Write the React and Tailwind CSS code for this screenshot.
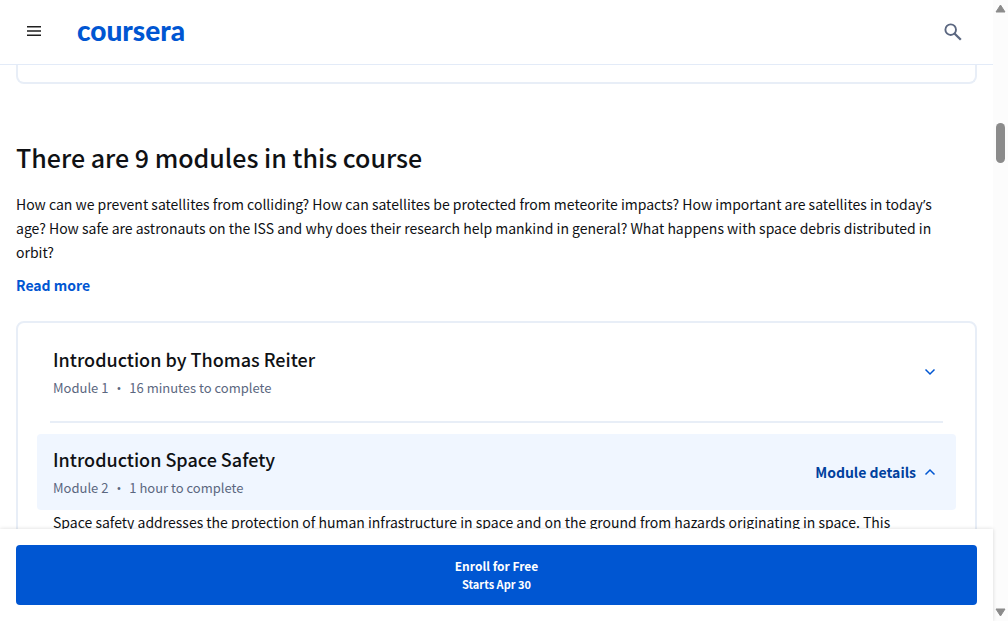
import React from "react";

const modules = [
  { title: "Introduction by Thomas Reiter", name: "Module 1", time: "16 minutes to complete", open: false },
  {
    title: "Introduction Space Safety",
    name: "Module 2",
    time: "1 hour to complete",
    open: true,
    text: "Space safety addresses the protection of human infrastructure in space and on the ground from hazards originating in space. This",
  },
];

function Chevron({ up }) {
  return (
    <svg width="12" height="12" viewBox="0 0 12 12" fill="none" stroke="#0056d2" strokeWidth="1.5" aria-hidden="true">
      <path d={up ? "M1.5 8.5L6 4l4.5 4.5" : "M1.5 3.5L6 8l4.5-4.5"} />
    </svg>
  );
}

function Header() {
  return (
    <header className="flex h-[65px] shrink-0 items-center border-b border-[#e3ebf8] bg-white pr-[31px] pl-[26px]">
      <button type="button" aria-label="Menu" className="flex size-4 items-center justify-center">
        <svg width="16" height="16" viewBox="0 0 16 16" aria-hidden="true">
          <path d="M1 2.8h14M1 7h14M1 11.2h14" stroke="#1f1f1f" strokeWidth="1.6" />
        </svg>
      </button>
      <a href="#home" className="ml-[35px] pb-1 font-['Lato',sans-serif] text-[28px] leading-8 font-black text-[#0056d2]">
        coursera
      </a>
      <button type="button" aria-label="Search" className="ml-auto">
        <svg width="18" height="18" viewBox="0 0 18 18" fill="none" stroke="#5b6780" aria-hidden="true">
          <circle cx="6.7" cy="6.7" r="5.3" strokeWidth="1.9" />
          <path d="M10.5 10.5L16.8 16.8" strokeWidth="2.3" />
        </svg>
      </button>
    </header>
  );
}

function ModuleRow({ item }) {
  return (
    <section>
      <button
        type="button"
        aria-expanded={item.open}
        className={
          item.open
            ? "flex w-full items-center justify-between rounded bg-[#f0f6ff] px-4 py-3 text-left"
            : "flex w-full items-center justify-between rounded px-4 py-3 text-left"
        }
      >
        <span className="flex flex-col gap-1.5">
          <span className="text-[18px] leading-[26px] font-medium">{item.title}</span>
          <span className="flex gap-2 text-[13px] leading-5 text-[#5b6780]">
            <span>{item.name}</span>
            <span className="font-['Open_Sans',sans-serif]">•</span>
            <span>{item.time}</span>
          </span>
        </span>
        <span className="flex items-center gap-2 pr-1 text-[14px] leading-6 font-bold text-[#00419e]">
          {item.open && <span>Module details</span>}
          <Chevron up={item.open} />
        </span>
      </button>
      {item.text && <p className="px-4 text-[14px] leading-6">{item.text}</p>}
    </section>
  );
}

function Scrollbar() {
  return (
    <div className="flex w-[15px] shrink-0 flex-col items-center bg-[#fcfcfc]" aria-hidden="true">
      <svg className="mt-1" width="11" height="9" viewBox="0 0 11 9">
        <path d="M5.5 1L10 8H1z" fill="#8b8b8b" stroke="#8b8b8b" strokeLinejoin="round" />
      </svg>
      <div className="mt-[110px] h-10 w-[9px] rounded-full bg-[#8b8b8b]" />
      <svg className="mt-auto mb-1" width="11" height="9" viewBox="0 0 11 9">
        <path d="M5.5 8L10 1H1z" fill="#8b8b8b" stroke="#8b8b8b" strokeLinejoin="round" />
      </svg>
    </div>
  );
}

export default function App() {
  return (
    <div className="flex h-screen bg-white font-['Noto_Sans_CJK_SC',sans-serif] text-[#0f1114]">
      <div className="flex min-w-0 flex-1 flex-col">
        <Header />
        <main className="min-h-0 flex-1 overflow-hidden px-4">
          <div className="h-[19px] rounded-b-lg border-2 border-t-0 border-[#e8eef7]" />
          <h2 className="mt-[55px] text-[25px] leading-9 font-medium">There are 9 modules in this course</h2>
          <p className="mt-[17px] pr-4 text-[14px] leading-6">
            How can we prevent satellites from colliding? How can satellites be protected from meteorite impacts? How
            important are satellites in today<span className="font-['Open_Sans',sans-serif] leading-none">’</span>s age?
            How safe are astronauts on the ISS and why does their research help mankind in general? What happens with
            space debris distributed in orbit?
          </p>
          <button type="button" className="mt-[9px] block text-[14px] leading-6 font-bold text-[#0056d2]">
            Read more
          </button>
          <div className="mt-6 rounded-lg border-2 border-[#e8eef7] pt-[11px] pr-[19px] pb-6 pl-[19px]">
            <ModuleRow item={modules[0]} />
            <hr className="mx-[13px] my-[11px] border-t-2 border-[#e8eef7]" />
            <ModuleRow item={modules[1]} />
          </div>
        </main>
        <footer className="relative bg-white p-4 shadow-[0_0_4px_rgba(0,0,0,0.15)]">
          <button
            type="button"
            className="flex h-[60px] w-full flex-col items-center justify-center rounded bg-[#0056d2] font-bold text-white"
          >
            <span className="text-[12px] leading-[18px]">Enroll for Free</span>
            <span className="text-[11px] leading-[18px]">Starts Apr 30</span>
          </button>
        </footer>
      </div>
      <Scrollbar />
    </div>
  );
}
